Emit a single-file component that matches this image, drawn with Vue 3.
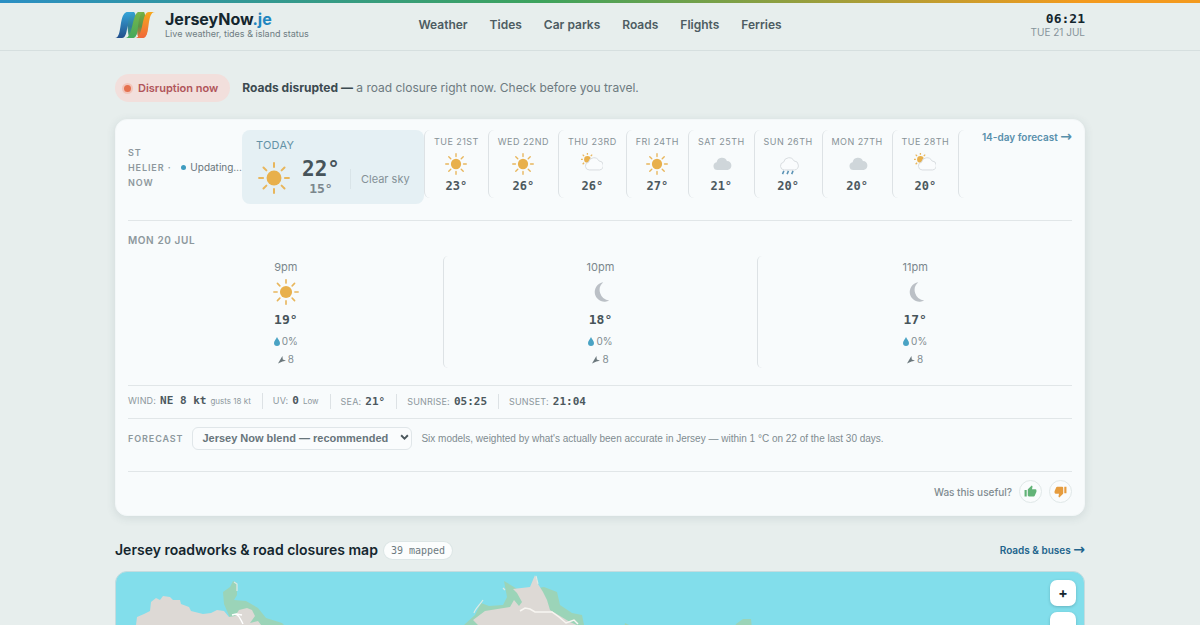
<script setup>
import { ref, h } from 'vue'

const navItems = ['Weather', 'Tides', 'Car parks', 'Roads', 'Flights', 'Ferries']

const days = [
  { label: 'Tue 21st', icon: 'sun', temp: '23°' },
  { label: 'Wed 22nd', icon: 'sun', temp: '26°' },
  { label: 'Thu 23rd', icon: 'partly', temp: '26°' },
  { label: 'Fri 24th', icon: 'sun', temp: '27°' },
  { label: 'Sat 25th', icon: 'cloud', temp: '21°' },
  { label: 'Sun 26th', icon: 'rain', temp: '20°' },
  { label: 'Mon 27th', icon: 'cloud', temp: '20°' },
  { label: 'Tue 28th', icon: 'partly', temp: '20°' },
]

const hours = [
  { time: '9pm', icon: 'sun', temp: '19°', rain: '0%', wind: '8' },
  { time: '10pm', icon: 'moon', temp: '18°', rain: '0%', wind: '8' },
  { time: '11pm', icon: 'moon', temp: '17°', rain: '0%', wind: '8' },
]

const stats = [
  { label: 'Wind:', value: 'NE 8 kt', note: 'gusts 18 kt' },
  { label: 'UV:', value: '0', note: 'Low' },
  { label: 'Sea:', value: '21°' },
  { label: 'Sunrise:', value: '05:25' },
  { label: 'Sunset:', value: '21:04' },
]

const model = ref('blend')

const CLOUD = 'M7 20.500a4.300 4.300 0 0 1-.8-8.500 6 6 0 0 1 11.300-1.400 5 5 0 0 1 .8 9.900z'

const WeatherIcon = (props) => {
  let parts = []
  if (props.name === 'sun') {
    parts = [
      h('circle', { cx: 12, cy: 12, r: 5.6, fill: '#e8b04c' }),
      h('path', {
        d: 'M12 .8v3M12 20.200v3M.8 12h3M20.200 12h3M4.100 4.100l2.200 2.200M17.700 17.700l2.200 2.200M4.100 19.900l2.200-2.200M17.700 6.300l2.200-2.200',
        stroke: '#e8b65c', 'stroke-width': 1.5, 'stroke-linecap': 'round', fill: 'none',
      }),
    ]
  } else if (props.name === 'moon') {
    parts = [h('path', { d: 'M15 3a9 9 0 1 0 5.500 16.800A9.600 9.600 0 0 1 15 3z', fill: '#bbc0c6' })]
  } else if (props.name === 'cloud') {
    parts = [h('path', { d: CLOUD, fill: '#cfd6da', transform: 'translate(1 -2)' })]
  } else if (props.name === 'rain') {
    parts = [
      h('path', { d: CLOUD, fill: '#fafcfd', stroke: '#d5dadd', 'stroke-width': 1, transform: 'translate(1 -2)' }),
      h('path', { d: 'M7.500 19.500l-1.500 3.500M12.500 19.500l-1.500 3.500M17.500 19.500l-1.500 3.500', stroke: '#5b93b5', 'stroke-width': 1.7, fill: 'none' }),
    ]
  } else {
    parts = [
      h('circle', { cx: 7, cy: 7, r: 3.6, fill: '#e8b04c' }),
      h('path', { d: 'M7 0v2M0 7h2M1.800 1.800l1.600 1.600M12.200 1.800l-1.600 1.600M1.800 12.200l1.600-1.600', stroke: '#e8b65c', 'stroke-width': 1.4, fill: 'none' }),
      h('path', { d: CLOUD, fill: '#fafcfd', stroke: '#d5dadd', 'stroke-width': 1, transform: 'translate(2 -2)' }),
    ]
  }
  return h('svg', { viewBox: '0 0 24 24', 'aria-hidden': 'true' }, parts)
}
WeatherIcon.props = ['name']
</script>

<template>
  <div class="page">
    <header class="topbar">
      <div class="wrap topbar-inner">
        <a class="brand" href="#">
          <svg class="logo" viewBox="0 0 40 28" aria-hidden="true">
            <defs>
              <linearGradient id="lgBlue" x1="0" y1="0" x2="0" y2="1">
                <stop offset="0" stop-color="#35a5d8" />
                <stop offset="1" stop-color="#234f8c" />
              </linearGradient>
              <linearGradient id="lgGreen" x1="0" y1="0" x2="0" y2="1">
                <stop offset="0" stop-color="#7ab648" />
                <stop offset="1" stop-color="#45a85c" />
              </linearGradient>
              <linearGradient id="lgOrange" x1="0" y1="0" x2="0" y2="1">
                <stop offset="0" stop-color="#f7a81c" />
                <stop offset="1" stop-color="#f0683a" />
              </linearGradient>
              <linearGradient id="lgFoldA" x1="0" y1="0" x2="0" y2="1">
                <stop offset="0" stop-color="#35a0d0" />
                <stop offset=".55" stop-color="#2f7f9a" />
                <stop offset="1" stop-color="#4aa85a" />
              </linearGradient>
              <linearGradient id="lgFoldB" x1="0" y1="0" x2="0" y2="1">
                <stop offset="0" stop-color="#74b045" />
                <stop offset=".55" stop-color="#5d9348" />
                <stop offset="1" stop-color="#f0683a" />
              </linearGradient>
            </defs>
            <path d="M12 1h7c3 3 1 9 3 14 1 5 0 10-4 12h-3c-3-3-1-10-4-15-1-4-3-8 1-11z" fill="url(#lgFoldA)" />
            <path d="M23 1h6c2 3 1 9 3 14 1 5 0 10-4 12h-4c-3-3-1-10-3-15-1-4-2-8 2-11z" fill="url(#lgFoldB)" />
            <path d="M0 27h7C15 27 10 1 20 1h-7C3 1 8 27 0 27z" fill="url(#lgBlue)" />
            <path d="M20 27h8C36 27 31 1 40 1h-6C26 1 29 27 20 27z" fill="url(#lgOrange)" />
            <path d="M10 27h8C26 27 20 1 30 1h-5C16 1 19 27 10 27z" fill="url(#lgGreen)" />
          </svg>
          <span class="brand-text">
            <span class="brand-name">JerseyNow<span class="brand-tld">.je</span></span>
            <span class="tagline">Live weather, tides &amp; island status</span>
          </span>
        </a>
        <nav class="nav" aria-label="Main">
          <a v-for="item in navItems" :key="item" href="#">{{ item }}</a>
        </nav>
        <div class="clock">
          <time class="clock-time">06:21</time>
          <span class="clock-date">TUE 21 JUL</span>
        </div>
      </div>
    </header>

    <main class="wrap">
      <section class="alert">
        <span class="pill"><i class="pill-dot"></i>Disruption now</span>
        <p><strong>Roads disrupted —</strong> a road closure right now. Check before you travel.</p>
      </section>

      <section class="card">
        <div class="strip">
          <div class="place">
            <span class="place-name">St Helier · Now</span>
            <span class="updating"><i></i>Updating…</span>
          </div>
          <div class="today">
            <span class="today-label">TODAY</span>
            <div class="today-row">
              <WeatherIcon class="today-icon" name="sun" />
              <div class="today-temps">
                <span class="hi">22°</span>
                <span class="lo">15°</span>
              </div>
              <span class="sky">Clear sky</span>
            </div>
          </div>
          <div v-for="d in days" :key="d.label" class="day">
            <span class="day-label">{{ d.label }}</span>
            <WeatherIcon class="day-icon" :name="d.icon" />
            <span class="day-temp">{{ d.temp }}</span>
          </div>
          <div class="more">
            <a href="#">14-day forecast <span class="go">→</span></a>
          </div>
        </div>

        <div class="hourly">
          <h2>Mon 20 Jul</h2>
          <div class="hours">
            <div v-for="x in hours" :key="x.time" class="hour">
              <span class="hour-time">{{ x.time }}</span>
              <WeatherIcon class="hour-icon" :name="x.icon" />
              <span class="hour-temp">{{ x.temp }}</span>
              <span class="hour-meta">
                <svg class="drop" viewBox="0 0 8 12" aria-hidden="true"><path d="M4 0C5 3 8 5 8 8a4 4 0 0 1-8 0c0-3 3-5 4-8z" fill="#4aa3c4" /></svg>{{ x.rain }}
              </span>
              <span class="hour-meta">
                <svg class="arrow" viewBox="0 0 10 10" aria-hidden="true"><path d="M0 9.500 5.500 0 6 4.500 10 6 5.500 7z" fill="#6b777c" /></svg>{{ x.wind }}
              </span>
            </div>
          </div>
        </div>

        <div class="stats">
          <span v-for="s in stats" :key="s.label" class="stat">
            <span class="stat-label">{{ s.label }}</span>
            <b>{{ s.value }}</b>
            <small v-if="s.note">{{ s.note }}</small>
          </span>
        </div>

        <div class="forecast">
          <label for="model">Forecast</label>
          <div class="select">
            <select id="model" v-model="model">
              <option value="blend">Jersey Now blend — recommended</option>
            </select>
            <svg viewBox="0 0 8 6" aria-hidden="true"><path d="M1 1l3 3 3-3" fill="none" stroke="#4b575c" stroke-width="1.700" /></svg>
          </div>
          <p>Six models, weighted by what's actually been accurate in Jersey — within 1 °C on 22 of the last 30 days.</p>
        </div>

        <div class="feedback">
          <span>Was this useful?</span>
          <button type="button" aria-label="Yes">
            <svg viewBox="0 0 24 24" fill="#62b377"><path d="M1 21h4V9H1zM23 10a2 2 0 0 0-2-2h-6.300l1-4.600v-.3c0-.4-.2-.8-.4-1.100L14.200 1 7.600 7.600C7.200 8 7 8.500 7 9v10c0 1.100.9 2 2 2h9c.8 0 1.500-.5 1.800-1.200l3-7.100c.1-.2.2-.5.2-.7z" /></svg>
          </button>
          <button type="button" aria-label="No">
            <svg viewBox="0 0 24 24" fill="#e69c3e"><path d="M15 3H6c-.8 0-1.500.5-1.800 1.200l-3 7.100c-.1.200-.2.5-.2.700v2c0 1.100.9 2 2 2h6.300l-1 4.600v.3c0 .4.200.8.400 1.100L9.800 23l6.600-6.600c.4-.4.6-.9.6-1.400V5a2 2 0 0 0-2-2zM19 3v12h4V3z" /></svg>
          </button>
        </div>
      </section>

      <section class="roads">
        <div class="roads-head">
          <h2>Jersey roadworks &amp; road closures map</h2>
          <span class="count">39 mapped</span>
          <a href="#">Roads &amp; buses <span class="go">→</span></a>
        </div>
        <div class="map">
          <svg class="map-art" viewBox="116 572 968 360" preserveAspectRatio="xMidYMin slice" aria-label="Map of Jersey roads">
            <g fill="#9bd4b8">
              <path d="M230 618l-6-14-1-12 7-5 3-6 4 2v12l-3 5 12 1 12 7 8 10 16 5 12 12H225z" />
              <path d="M464 932V625l11-10 6-12 8 3 14-1 4-8-3-16 10 6 6 4 24-4 13 5 3 13 12 8 10 2 3 15z" />
              <path d="M730 640l6-16 7-5 8 0 2 21z" />
              <path d="M622 640l3-17 4 2 3 15z" />
            </g>
            <g fill="#ddd9d5">
              <path d="M134 932l2-307 1-8 7-3 6-3 1-9 5-4 4 2 3-4 7 1 3 3 7 0 1 4 8 3 2 4 12 3 8-1 6-3 7 1 5 6 6-1 4-6 8-2 5 2 3 6-5 7 8-2 7 9 8 12z" />
              <path d="M470 932l8-307-5-5 12-9 25-4 4-7 5 6 3-4-5-9-4-4 17-2 5-12 3 9 5 8 4 8 3 10 10 6 10 6 9 4 7 12z" />
            </g>
            <path d="M232 615l4-1c3 2 4 3 5 6l2 4M236 614l6 1" fill="none" stroke="#fff" stroke-width="1.500" />
            <path d="M474 613c1-4 5-7 9-13M503 588l2 2M234 582l3 2 0 7M536 576l2 8" fill="none" stroke="#dfeae4" stroke-width="1.200" />
            <path d="M520 611l5-3 5 1 5 3 17 0 7 5 7 6 8-3 4 4" fill="none" stroke="#f8f6f2" stroke-width="1.500" />
          </svg>
          <div class="zoom">
            <button type="button" aria-label="Zoom in">+</button>
            <button type="button" aria-label="Zoom out">−</button>
          </div>
        </div>
      </section>
    </main>
  </div>
</template>

<style>
body {
  margin: 0;
  background: #e7eeed;
}
</style>

<style scoped>
* {
  box-sizing: border-box;
}
.page {
  font-family: Inter, "Liberation Sans", sans-serif;
  color: #14262e;
  overflow: hidden;
}
a {
  color: inherit;
  text-decoration: none;
}
h2,
p {
  margin: 0;
}
button,
select {
  font-family: inherit;
}
.wrap {
  max-width: 970px;
  margin: 0 auto;
}
.go {
  font-family: "DejaVu Sans", sans-serif;
  font-size: 14px;
  line-height: 10px;
}

.topbar {
  border-bottom: 1px solid #d6dfdf;
}
.topbar::before {
  content: "";
  display: block;
  height: 3px;
  background: linear-gradient(90deg, #2b8fc4, #3da35d 45%, #f39a1e 90%);
}
.topbar-inner {
  display: grid;
  grid-template-columns: 1fr auto 1fr;
  align-items: center;
  height: 47px;
  padding-bottom: 4px;
}
.brand {
  display: flex;
  align-items: center;
  gap: 10px;
}
.logo {
  width: 40px;
  height: 28px;
}
.brand-text,
.clock {
  display: flex;
  flex-direction: column;
}
.brand-name {
  font-size: 16px;
  line-height: 17px;
  font-weight: 700;
}
.brand-tld {
  color: #1f86c0;
}
.tagline {
  font-size: 9px;
  line-height: 11px;
  color: #6e7c82;
}
.nav {
  display: flex;
  gap: 22px;
  font-size: 12px;
  font-weight: 600;
  color: #4d5c62;
}
.clock {
  align-items: flex-end;
}
.clock-time {
  font: 700 13px/15px "DejaVu Sans Mono", monospace;
}
.clock-date {
  font-size: 10px;
  line-height: 13px;
  color: #86939a;
}

.alert {
  display: flex;
  align-items: center;
  gap: 12px;
  padding: 23px 0 17px;
  font-size: 12px;
  line-height: 18px;
  color: #6d7a80;
}
.alert strong {
  color: #3c4a50;
}
.pill {
  display: flex;
  align-items: center;
  gap: 7px;
  height: 28px;
  padding: 0 12px 0 9px;
  border-radius: 14px;
  background: #f2dfdc;
  color: #b0555a;
  font-size: 11px;
  font-weight: 600;
}
.pill-dot {
  width: 7px;
  height: 7px;
  border-radius: 50%;
  background: #e5714f;
  box-shadow: 0 0 0 2px #f2c6bc;
}

.card {
  padding: 10px 12px 12px;
  border: 1px solid #f3f7f8;
  border-radius: 12px;
  background: #f8fbfc;
  box-shadow: 0 2px 10px rgba(40, 70, 80, 0.12);
}
.strip {
  display: flex;
  align-items: flex-start;
  padding-bottom: 16px;
  border-bottom: 1px solid #e1e6e8;
}
.place {
  display: flex;
  align-items: center;
  align-self: center;
  width: 114px;
  gap: 5px;
}
.place-name {
  flex: 1;
  font-size: 9px;
  line-height: 15px;
  font-weight: 600;
  letter-spacing: 0.1em;
  text-transform: uppercase;
  color: #8d989d;
}
.updating {
  display: flex;
  align-items: center;
  gap: 4px;
  font-size: 10px;
  color: #68757b;
}
.updating i {
  width: 5px;
  height: 5px;
  border-radius: 50%;
  background: #3f9cc0;
}
.today {
  width: 182px;
  height: 74px;
  padding: 9px 14px;
  border-radius: 8px;
  background: #e5f0f4;
}
.today-label {
  display: block;
  font-size: 11px;
  line-height: 13px;
  letter-spacing: 0.02em;
  color: #6492a6;
}
.today-row {
  display: flex;
  align-items: center;
  padding-top: 5px;
}
.today-icon {
  width: 32px;
  height: 32px;
  margin: 2px 12px 0 2px;
}
.today-temps {
  display: flex;
  flex-direction: column;
  align-items: center;
}
.hi {
  font: 700 21px/24px "DejaVu Sans Mono", monospace;
  color: #47545a;
}
.lo {
  font: 700 13px/15px "DejaVu Sans Mono", monospace;
  color: #7b878d;
}
.sky {
  margin: 4px 0 0 10px;
  padding-left: 10px;
  border-left: 1px solid #d9e4e8;
  font-size: 11px;
  line-height: 20px;
  color: #849197;
  white-space: nowrap;
}
.day {
  display: flex;
  flex-direction: column;
  align-items: center;
  height: 68px;
  padding: 5px 9px 0;
  border-left: 1px solid #dde2e5;
  border-radius: 6px;
}
.day-label {
  font-size: 9px;
  line-height: 14px;
  letter-spacing: 0.05em;
  text-transform: uppercase;
  color: #879297;
  white-space: nowrap;
}
.day-icon {
  width: 22px;
  height: 22px;
  margin: 4px 0;
}
.day-temp {
  font: 700 12px/14px "DejaVu Sans Mono", monospace;
  color: #4c585e;
}
.more {
  flex: 1;
  height: 68px;
  border-left: 1px solid #dde2e5;
  border-radius: 6px;
  text-align: right;
  font-size: 10px;
  line-height: 14px;
  font-weight: 600;
  color: #5890ac;
  white-space: nowrap;
}

.hourly {
  padding: 12px 0 17px;
  border-bottom: 1px solid #e1e6e8;
}
.hourly h2 {
  font-size: 10px;
  line-height: 14px;
  font-weight: 600;
  letter-spacing: 0.06em;
  text-transform: uppercase;
  color: #8d989d;
}
.hours {
  display: grid;
  grid-template-columns: repeat(3, 1fr);
  margin-top: 9px;
}
.hour {
  display: flex;
  flex-direction: column;
  align-items: center;
  height: 112px;
  padding-top: 4px;
  border-left: 1px solid #dde2e5;
  border-radius: 5px;
}
.hour:first-child {
  border-left-color: transparent;
}
.hour-time {
  font-size: 11px;
  line-height: 14px;
  color: #7b878d;
}
.hour-icon {
  width: 26px;
  height: 26px;
  margin: 5px 0 8px;
}
.hour-temp {
  font: 700 13px/14px "DejaVu Sans Mono", monospace;
  color: #47545a;
}
.hour-meta {
  display: flex;
  align-items: center;
  gap: 2px;
  margin-top: 5px;
  font-size: 10px;
  line-height: 13px;
  color: #7f8b90;
}
.hour-temp + .hour-meta {
  margin-top: 8px;
}
.drop {
  width: 6px;
  height: 9px;
}
.arrow {
  width: 8px;
  height: 8px;
}

.stats {
  display: flex;
  align-items: center;
  height: 33px;
  padding-bottom: 2px;
  border-bottom: 1px solid #e1e6e8;
  color: #8d989d;
}
.stat {
  display: flex;
  align-items: baseline;
  gap: 4px;
  line-height: 15px;
}
.stat + .stat {
  margin-left: 11px;
  padding-left: 10px;
  border-left: 1px solid #dde2e5;
}
.stat-label {
  font-size: 9px;
  letter-spacing: 0.02em;
  text-transform: uppercase;
}
.stat b {
  font: 700 11px/15px "DejaVu Sans Mono", monospace;
  color: #4c585e;
}
.stat small {
  font-size: 8px;
}

.forecast {
  display: flex;
  align-items: center;
  gap: 9px;
  height: 53px;
  padding-bottom: 14px;
  border-bottom: 1px solid #e1e6e8;
  color: #7f8b90;
}
.forecast label {
  font-size: 9px;
  font-weight: 600;
  letter-spacing: 0.1em;
  text-transform: uppercase;
  color: #8d989d;
}
.forecast p {
  font-family: "Liberation Sans", sans-serif;
  font-size: 10px;
}
.select {
  position: relative;
  width: 220px;
}
.select select {
  appearance: none;
  width: 100%;
  height: 23px;
  padding: 0 20px 0 9px;
  border: 1px solid #e0e6e9;
  border-radius: 6px;
  background: #fafcfd;
  color: #68757b;
  font-family: "Liberation Sans", sans-serif;
  font-size: 11px;
  font-weight: 600;
}
.select svg {
  position: absolute;
  right: 3px;
  top: 8px;
  width: 9px;
  height: 7px;
}
.feedback {
  display: flex;
  align-items: center;
  justify-content: flex-end;
  gap: 7px;
  padding-top: 8px;
  font-size: 10px;
  font-weight: 500;
  color: #7f8b90;
}
.feedback button {
  display: grid;
  place-items: center;
  width: 23px;
  height: 23px;
  padding: 0;
  border: 1px solid #e0e8e8;
  border-radius: 50%;
  background: #fafcfd;
}
.feedback svg {
  width: 13px;
  height: 13px;
}

.roads-head {
  display: flex;
  align-items: center;
  height: 20px;
  margin: 24px 0 11px;
}
.roads-head h2 {
  font-size: 14px;
  line-height: 20px;
  font-weight: 600;
}
.count {
  margin-left: 6px;
  padding: 0 7px;
  border-radius: 9px;
  background: #fbfdfd;
  box-shadow: 0 0 0 1px #dde6e6;
  font: 10px/17px "DejaVu Sans Mono", monospace;
  color: #6d7a80;
}
.roads-head a {
  margin-left: auto;
  font-size: 10px;
  font-weight: 600;
  color: #22648c;
}
.map {
  position: relative;
  height: 360px;
  border: 1px solid #c5dcdf;
  border-radius: 12px;
  overflow: hidden;
  background: #82deeb;
}
.map-art {
  display: block;
  width: 100%;
  height: 100%;
}
.zoom {
  position: absolute;
  top: 8px;
  right: 8px;
  display: grid;
  gap: 6px;
}
.zoom button {
  width: 26px;
  height: 26px;
  padding: 0;
  border: 0;
  border-radius: 7px;
  background: #fff;
  box-shadow: 0 1px 3px rgba(20, 60, 70, 0.25);
  color: #14262e;
  font-size: 14px;
  font-weight: 700;
  line-height: 24px;
}
</style>
